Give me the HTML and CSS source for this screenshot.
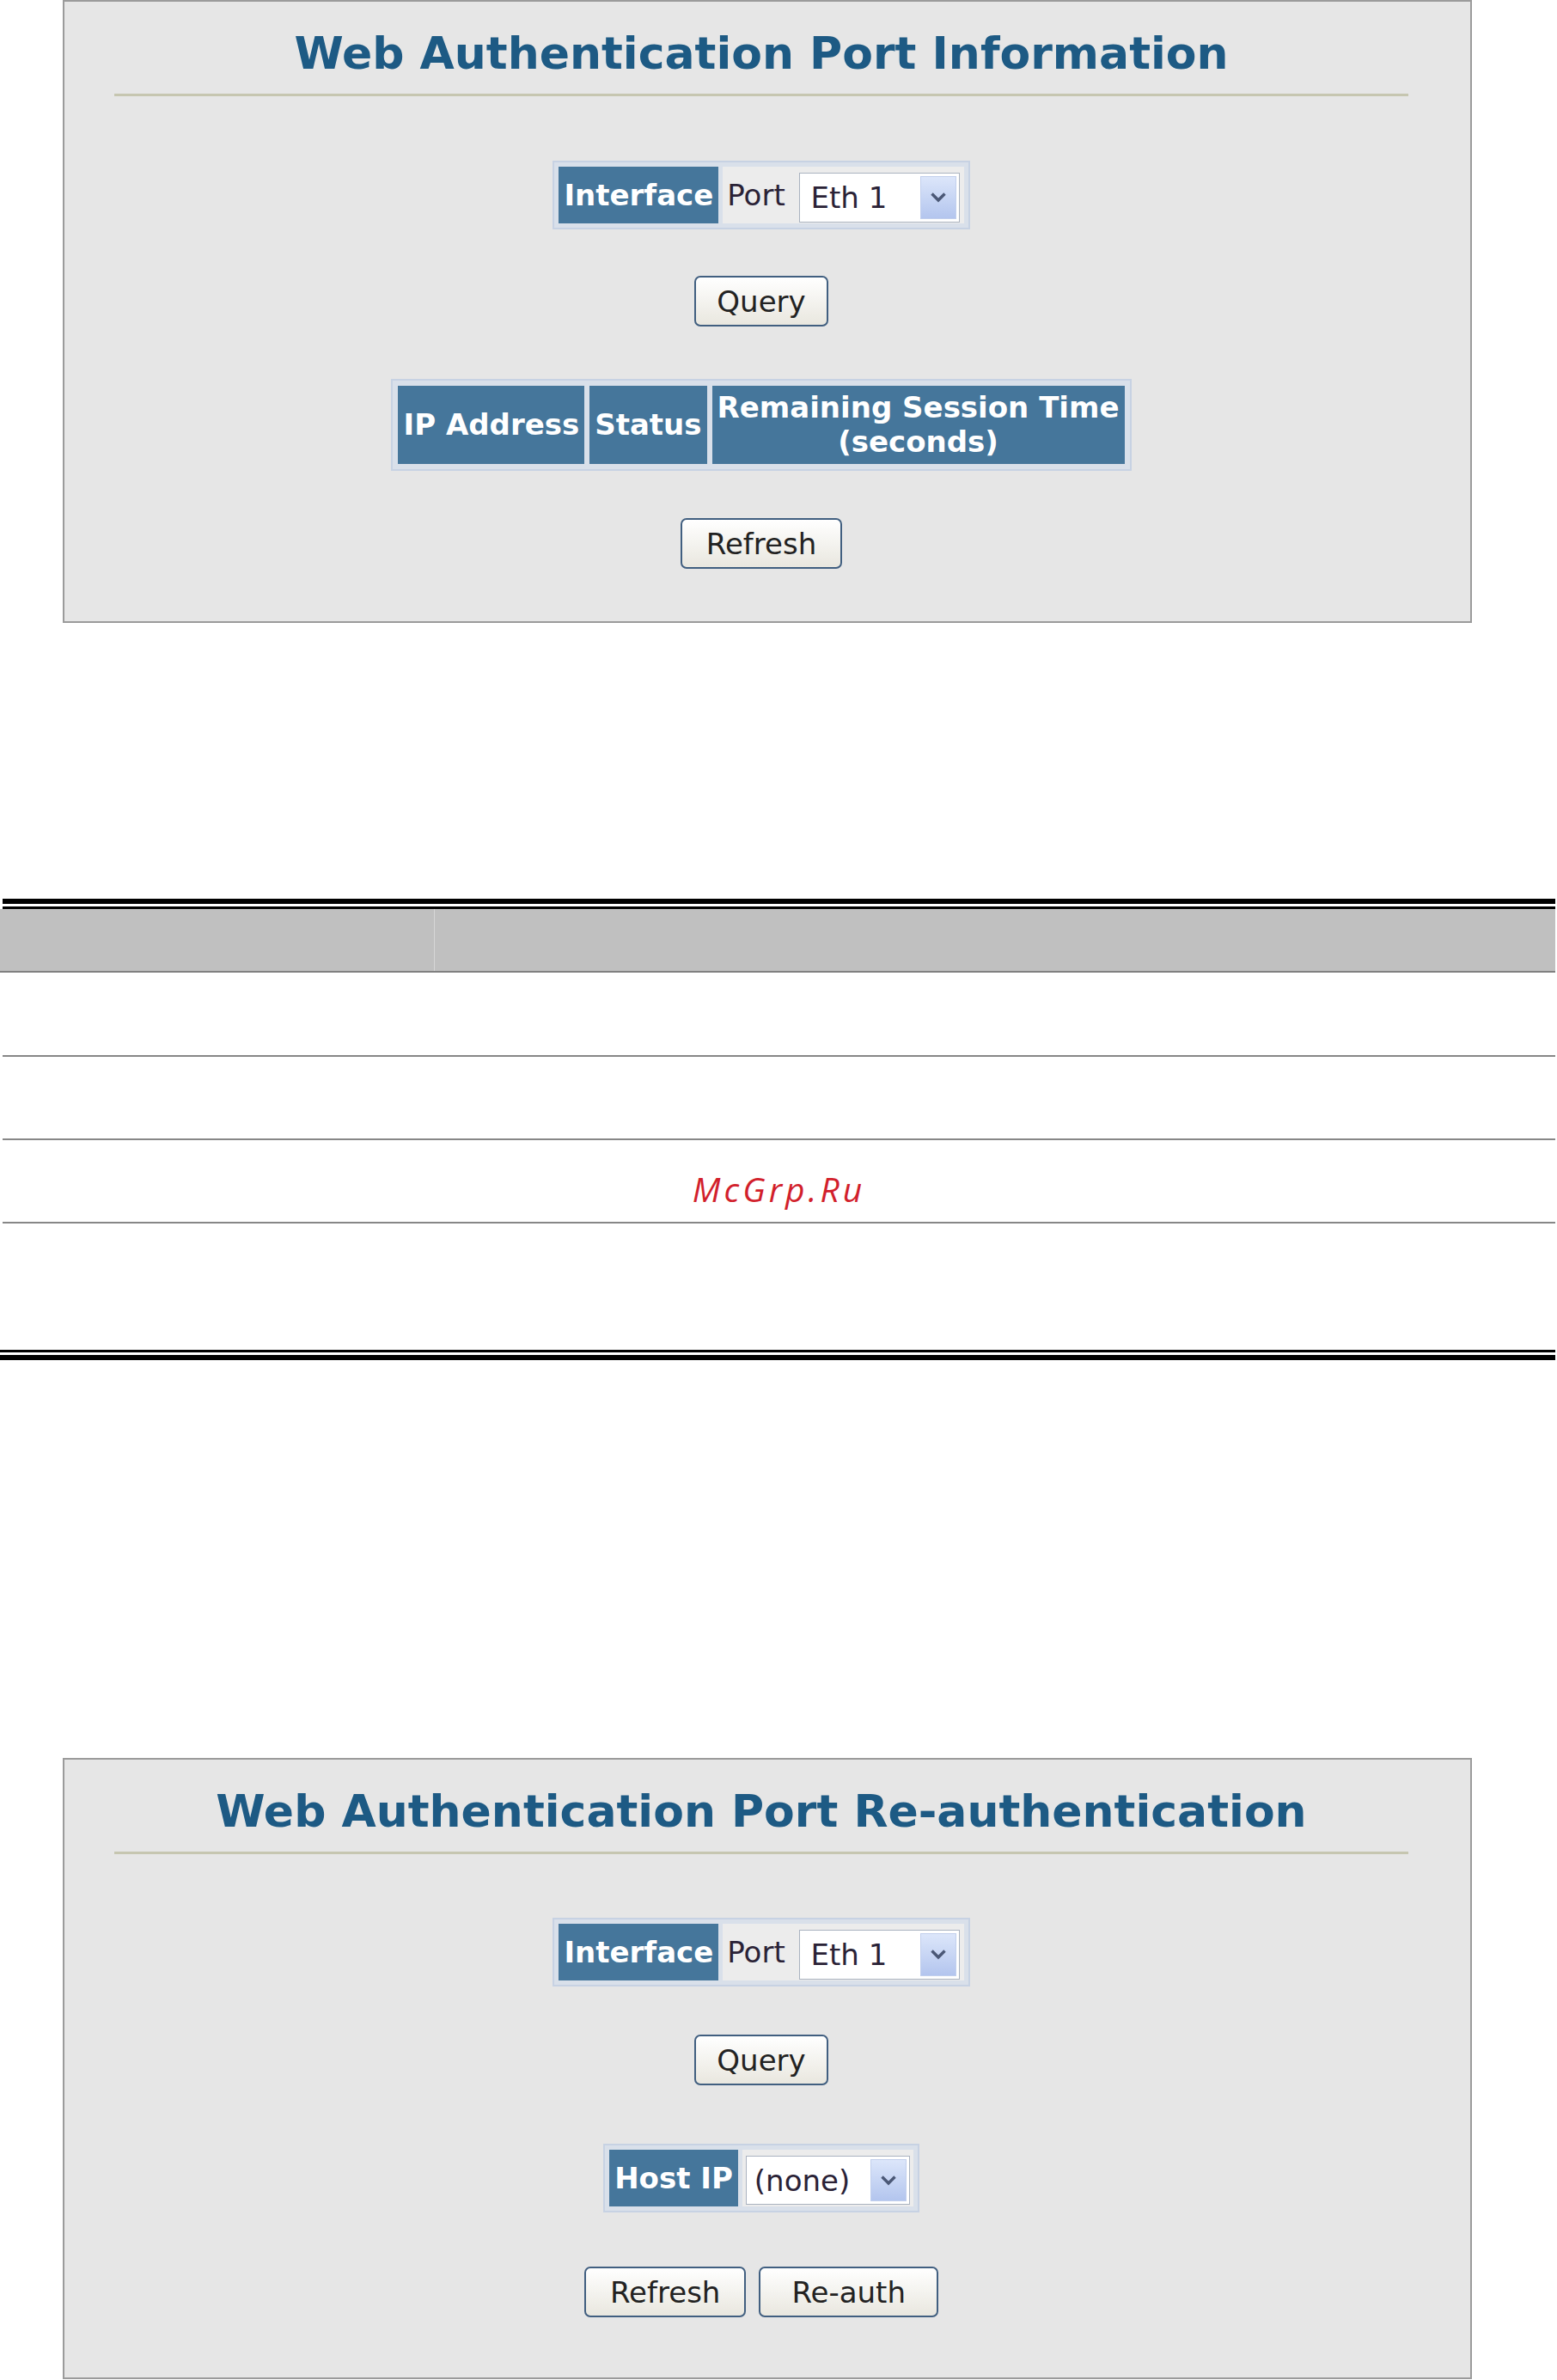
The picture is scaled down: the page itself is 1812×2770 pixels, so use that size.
FILE: index.html
```html
<!DOCTYPE html>
<html lang="en">

<head>
    <meta charset="UTF-8">
    <meta name="viewport" content="width=device-width, initial-scale=1.0">
    <title>Web Authentication Port</title>
    <link rel="stylesheet" href="styles.css">
</head>

<body>

    <div class="panel panel-info">
        <h1 class="panel-title">Web Authentication Port Information</h1>
        <table class="frame frame-iface">
            <tr>
                <th>Interface</th>
                <td class="field-cell">Port <span class="select select-port"><span class="select-value">Eth 1</span><span class="select-arrow"><svg width="20" height="13" viewBox="0 0 20 13"><path d="M2.5 2.5 L10 10 L17.5 2.5" fill="none" stroke="#4b5876" stroke-width="3.4"/></svg></span></span></td>
            </tr>
        </table>
        <button class="btn btn-query">Query</button>
        <table class="frame frame-sessions">
            <tr>
                <th>IP Address</th>
                <th>Status</th>
                <th>Remaining Session Time<br>(seconds)</th>
            </tr>
        </table>
        <div class="btn-row btn-row-info">
            <button class="btn">Refresh</button>
        </div>
    </div>

    <div class="doc">
        <div class="rule-thick"></div>
        <div class="rule-thin"></div>
        <div class="doc-head">
            <div class="doc-head-first"></div>
            <div class="doc-head-rest"></div>
        </div>
        <div class="doc-row"></div>
        <div class="doc-row row-short"></div>
        <div class="doc-row row-mark">McGrp.Ru</div>
        <div class="doc-row row-last"></div>
        <div class="rule-thin rule-bottom"></div>
        <div class="rule-thick rule-bottom"></div>
    </div>

    <div class="panel panel-reauth">
        <h1 class="panel-title">Web Authentication Port Re-authentication</h1>
        <table class="frame frame-iface">
            <tr>
                <th>Interface</th>
                <td class="field-cell">Port <span class="select select-port"><span class="select-value">Eth 1</span><span class="select-arrow"><svg width="20" height="13" viewBox="0 0 20 13"><path d="M2.5 2.5 L10 10 L17.5 2.5" fill="none" stroke="#4b5876" stroke-width="3.4"/></svg></span></span></td>
            </tr>
        </table>
        <button class="btn btn-query">Query</button>
        <table class="frame frame-host">
            <tr>
                <th>Host IP</th>
                <td class="field-cell host-cell"><span class="select select-host"><span class="select-value">(none)</span><span class="select-arrow"><svg width="20" height="13" viewBox="0 0 20 13"><path d="M2.5 2.5 L10 10 L17.5 2.5" fill="none" stroke="#4b5876" stroke-width="3.4"/></svg></span></span></td>
            </tr>
        </table>
        <div class="btn-row btn-row-reauth">
            <button class="btn">Refresh</button>
            <button class="btn btn-reauth">Re-auth</button>
        </div>
    </div>

</body>

</html>
```

FILE: styles.css
```css
body {
    margin: 0;
    background-color: #fff;
    font-family: "DejaVu Sans", Verdana, sans-serif;
}

/* grey web panels */
.panel {
    box-sizing: border-box;
    width: 1640px;
    margin-left: 73px;
    padding: 30px 72px 61px 58px;
    background-color: #e6e6e6;
    border: 2px solid #9b9b9b;
    display: flex;
    flex-direction: column;
    align-items: center;
}

.panel-reauth {
    margin-top: 463px;
    padding-bottom: 70px;
}

.panel-title {
    align-self: stretch;
    margin: 0;
    padding-bottom: 17px;
    border-bottom: 3px solid #c6c6b0;
    text-align: center;
    font-size: 52px;
    line-height: 60px;
    font-weight: bold;
    color: #1d5a84;
}

.frame {
    border-collapse: separate;
    border-spacing: 5px;
    border: 2px solid #c7d2e3;
    background-color: #d9e0ea;
}

.frame th {
    padding: 0 6px;
    background-color: #45769b;
    color: #fff;
    font-size: 34px;
    font-weight: bold;
    white-space: nowrap;
    line-height: 66px;
}

.frame-iface {
    margin-top: 75px;
}

.panel-reauth .frame-iface {
    margin-top: 74px;
}

.field-cell {
    padding: 0 5px;
    background-color: #ececec;
    font-size: 34px;
    line-height: 66px;
    color: #2a2236;
    white-space: nowrap;
}

.host-cell {
    padding: 0 4px;
}

.select {
    display: inline-flex;
    box-sizing: border-box;
    width: 187px;
    height: 58px;
    margin-left: 5px;
    padding: 3px;
    border: 1px solid #aab3c0;
    background-color: #fff;
    vertical-align: middle;
    line-height: normal;
}

.select-host {
    width: 191px;
    height: 57px;
    margin-left: 0;
}

.select-value {
    flex: 1;
    display: flex;
    align-items: center;
    padding-left: 10px;
}

.select-host .select-value {
    padding-left: 6px;
}

.select-arrow {
    box-sizing: border-box;
    width: 42px;
    display: flex;
    align-items: center;
    justify-content: center;
    border: 1px solid #c2cfec;
    background: linear-gradient(#dce6fa, #b3c5ee);
}

.frame-sessions {
    margin-top: 61px;
    border-spacing: 6px;
}

.frame-sessions th {
    padding: 5px 6px 6px;
    line-height: 40px;
}

.frame-host {
    margin-top: 68px;
}

.btn {
    display: block;
    box-sizing: border-box;
    height: 59px;
    padding: 0 28px;
    font-family: inherit;
    font-size: 34px;
    color: #222;
    border: 2px solid #415f80;
    border-radius: 7px;
    background: linear-gradient(#ffffff, #e9e7df);
    cursor: pointer;
}

.btn-query {
    margin-top: 54px;
    padding: 0 24px;
}

.panel-reauth .btn-query {
    margin-top: 56px;
}

.btn-reauth {
    padding: 0 36px;
}

.btn-row {
    display: flex;
    gap: 15px;
}

.btn-row-info {
    margin-top: 55px;
}

.btn-row-reauth {
    margin-top: 63px;
}

/* manual table between the panels */
.doc {
    margin-top: 321px;
    width: 1810px;
}

.rule-thick {
    height: 6px;
    margin-left: 3px;
    background-color: #000;
}

.rule-thin {
    height: 3px;
    margin: 3px 0 0 3px;
    background-color: #000;
}

.rule-bottom {
    margin-left: 0;
}

.rule-thick.rule-bottom {
    margin-top: 3px;
}

.doc-head {
    display: flex;
    height: 72px;
    background-color: #c0c0c0;
    border-bottom: 2px solid #808080;
}

.doc-head-first {
    width: 505px;
    border-right: 1px solid #d6d6d6;
}

.doc-row {
    height: 96px;
    margin-left: 3px;
    border-bottom: 2px solid #878787;
}

.row-short {
    height: 95px;
}

.row-mark {
    box-sizing: border-box;
    height: 97px;
    padding-top: 31px;
    text-align: center;
    font-family: "Open Sans", sans-serif;
    font-style: italic;
    font-size: 39px;
    line-height: 52px;
    letter-spacing: 4px;
    color: #d21f2c;
}

.row-last {
    height: 144px;
    border-bottom: none;
}
```
